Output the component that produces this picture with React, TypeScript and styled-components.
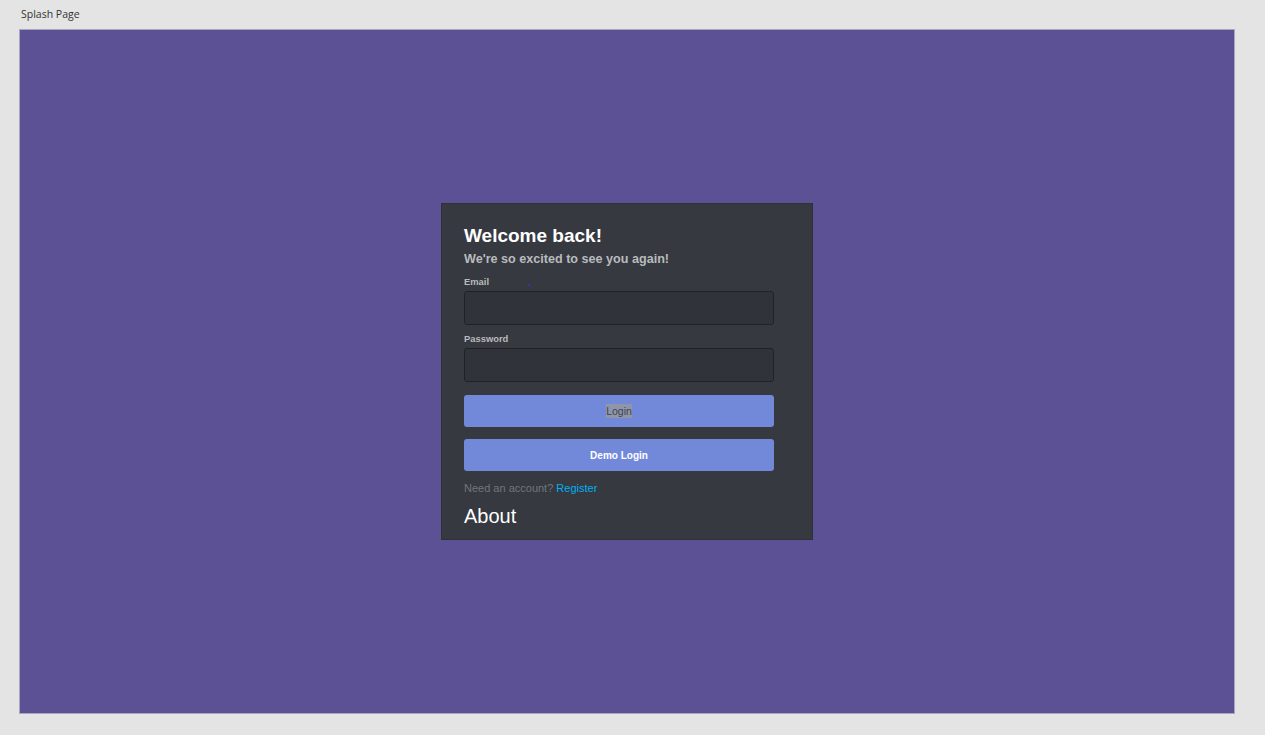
import React from "react";
import styled, { createGlobalStyle } from "styled-components";

const Global = createGlobalStyle`
  html, body { margin: 0; padding: 0; background: #e4e4e4; }
  * { box-sizing: border-box; }
`;

const Page = styled.div`
  width: 1265px;
  height: 735px;
  padding: 6px 29px 0 19px;
  display: flex;
  flex-direction: column;
`;

const FrameLabel = styled.div`
  font-family: "Open Sans", "Noto Sans", sans-serif;
  font-size: 10.5px;
  color: #333;
  height: 23px;
  line-height: 16px;
  padding-left: 2px;
`;

const Frame = styled.div`
  width: 1216px;
  height: 685px;
  background: #5c5195;
  border: 1px solid #a9a6bd;
  display: flex;
  align-items: center;
  justify-content: center;
`;

const Card = styled.div`
  width: 372px;
  height: 337px;
  background: #36393f;
  border: 1px solid #2f3136;
  padding: 20px 38px 0 22px;
  font-family: "Liberation Sans", Arial, sans-serif;
  display: flex;
  flex-direction: column;
`;

const Title = styled.h1`
  margin: 0;
  font-size: 19px;
  line-height: 24px;
  font-weight: 700;
  color: #ffffff;
`;

const Subtitle = styled.div`
  margin-top: 3px;
  font-size: 12.6px;
  line-height: 16px;
  font-weight: 700;
  color: #b9bbbe;
`;

const Field = styled.div<{ $top: number }>`
  margin-top: ${(p) => p.$top}px;
  display: flex;
  flex-direction: column;
`;

const Label = styled.label`
  font-size: 9.4px;
  line-height: 12px;
  font-weight: 700;
  color: #b9bbbe;
  margin-bottom: 3px;
  position: relative;
`;

const Dot = styled.span`
  position: absolute;
  left: 64px;
  top: 8px;
  width: 2px;
  height: 2px;
  background: #3a2fb0;
`;

const Input = styled.input`
  width: 310px;
  height: 34px;
  background: #303339;
  border: 1px solid #212226;
  border-radius: 3px;
  outline: none;
  color: #dcddde;
  padding: 0 8px;
`;

const Button = styled.button<{ $top: number; $primary?: boolean }>`
  margin-top: ${(p) => p.$top}px;
  width: 310px;
  height: 32px;
  background: #7289da;
  border: none;
  border-radius: 3px;
  font-family: "Liberation Sans", Arial, sans-serif;
  font-size: ${(p) => (p.$primary ? "10px" : "10.5px")};
  font-weight: ${(p) => (p.$primary ? 700 : 400)};
  color: ${(p) => (p.$primary ? "#ffffff" : "#3f434a")};
  cursor: pointer;
  display: flex;
  align-items: center;
  justify-content: center;
`;

const Highlight = styled.span`
  background: #8f96ab;
  padding: 1px 0;
`;

const Register = styled.div`
  margin-top: 10px;
  font-size: 11px;
  line-height: 14px;
  color: #72767d;
`;

const Link = styled.a`
  color: #00b0f4;
  text-decoration: none;
`;

const About = styled.div`
  margin-top: 9px;
  font-size: 20px;
  line-height: 24px;
  color: #ffffff;
`;

export default function App() {
  return (
    <>
      <Global />
      <Page>
        <FrameLabel>Splash Page</FrameLabel>
        <Frame>
          <Card>
            <Title>Welcome back!</Title>
            <Subtitle>We're so excited to see you again!</Subtitle>
            <Field $top={9}>
              <Label>
                Email
                <Dot />
              </Label>
              <Input type="email" />
            </Field>
            <Field $top={8}>
              <Label>Password</Label>
              <Input type="password" />
            </Field>
            <Button $top={13}>
              <Highlight>Login</Highlight>
            </Button>
            <Button $top={12} $primary>
              Demo Login
            </Button>
            <Register>
              Need an account? <Link href="#">Register</Link>
            </Register>
            <About>About</About>
          </Card>
        </Frame>
      </Page>
    </>
  );
}
